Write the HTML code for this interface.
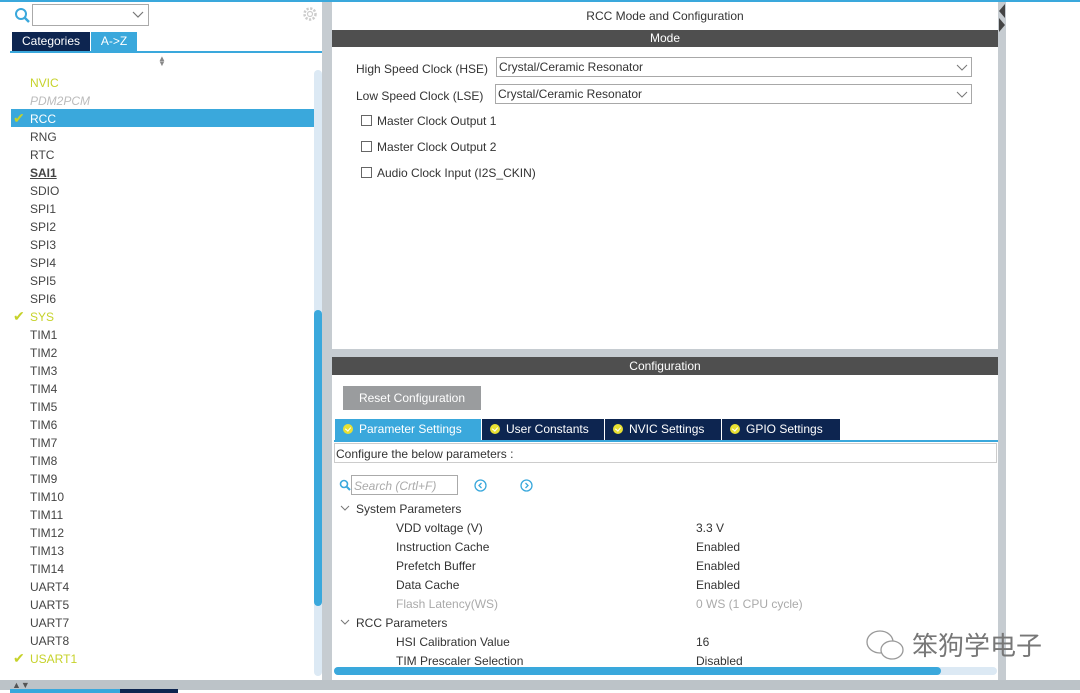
<!DOCTYPE html>
<html><head><meta charset="utf-8"><style>
*{margin:0;padding:0;box-sizing:border-box}
body{width:1080px;height:693px;overflow:hidden;background:#fff;font-family:"Liberation Sans","Noto Sans CJK SC",sans-serif;font-size:12px;color:#333;position:relative}
.a{position:absolute}
.li{position:absolute;left:30px;font-size:12px;color:#444;white-space:nowrap;margin-top:1px}
.t{position:absolute;white-space:nowrap;font-size:12px;color:#333}
.chk{position:absolute;width:11px;height:11px;border:1px solid #666;background:#fff}
.sel{position:absolute;height:20px;border:1px solid #a8a8a8;background:#fff;padding-left:2px;line-height:18px;color:#333}
.tab{position:absolute;top:419px;height:21px;color:#fff;line-height:21px;font-size:12px;padding-left:8px;white-space:nowrap}
.dot{display:inline-block;width:10px;height:10px;border-radius:50%;background:#e8e033;margin-right:6px;vertical-align:-1px;position:relative}
.dot:after{content:"";position:absolute;left:3px;top:2px;width:3px;height:4px;border:solid #fff;border-width:0 1.5px 1.5px 0;transform:rotate(40deg)}
</style></head><body>
<div class="a" style="left:0;top:0;width:1080px;height:2px;background:#3aa8dc"></div>
<div class="a" style="left:322px;top:2px;width:10px;height:678px;background:#c6ccd1"></div>
<div class="a" style="left:998px;top:2px;width:8px;height:678px;background:#c6ccd1"></div>
<div class="a" style="left:0;top:680px;width:1080px;height:10px;background:#bcc3c8"></div>
<div class="a" style="left:12px;top:680px;font-size:9px;color:#555;line-height:10px">▲▼</div>
<div class="a" style="left:10px;top:689px;width:110px;height:4px;background:#3aa8dc"></div>
<div class="a" style="left:120px;top:689px;width:58px;height:4px;background:#0d2550"></div>
<div class="a" style="left:999px;top:4px;width:0;height:0;border-top:7px solid transparent;border-bottom:7px solid transparent;border-right:6px solid #444"></div>
<div class="a" style="left:999px;top:18px;width:0;height:0;border-top:7px solid transparent;border-bottom:7px solid transparent;border-left:6px solid #444"></div>
<svg class="a" style="left:14px;top:7px" width="18" height="18" viewBox="0 0 18 18"><circle cx="7" cy="7" r="5" fill="none" stroke="#3aa8dc" stroke-width="2"/><line x1="10.5" y1="10.5" x2="15" y2="15" stroke="#3aa8dc" stroke-width="2.5"/></svg>
<div class="a" style="left:32px;top:4px;width:117px;height:22px;border:1px solid #aaa;background:#fff"></div>
<svg class="a" style="left:132px;top:11px" width="12" height="8"><polyline points="1,1 6,6 11,1" fill="none" stroke="#777" stroke-width="1.2"/></svg>
<svg class="a" style="left:302px;top:6px" width="16" height="16" viewBox="0 0 16 16"><circle cx="8" cy="8" r="5.5" fill="none" stroke="#ccc" stroke-width="2.5" stroke-dasharray="2.2 1.5"/><circle cx="8" cy="8" r="2.5" fill="none" stroke="#ccc" stroke-width="1.2"/></svg>
<div class="a" style="left:12px;top:32px;width:78px;height:19px;background:#0d2550;color:#fff;line-height:19px;text-align:center;font-size:12px">Categories</div>
<div class="a" style="left:91px;top:32px;width:46px;height:19px;background:#3aa8dc;color:#fff;line-height:19px;text-align:center;font-size:12px">A-&gt;Z</div>
<div class="a" style="left:10px;top:51px;width:312px;height:2px;background:#3aa8dc"></div>
<div class="a" style="left:158px;top:56px;font-size:8px;color:#888;line-height:5px">▲<br>▼</div>
<div class="a" style="left:314px;top:70px;width:8px;height:606px;background:#dce9f4;border-radius:4px"></div>
<div class="a" style="left:314px;top:310px;width:8px;height:296px;background:#3aa8dc;border-radius:4px"></div>
<div class="a" style="left:11px;top:109px;width:303px;height:18px;background:#3aa8dc"></div>
<div class="li" style="top:75px;color:#c6d22a">NVIC</div>
<div class="li" style="top:93px;color:#bbb;font-style:italic">PDM2PCM</div>
<div class="li" style="top:111px;color:#fff">RCC</div>
<div class="a" style="left:13px;top:110px;color:#c6d22a;font-size:14px">✔</div>
<div class="li" style="top:129px">RNG</div>
<div class="li" style="top:147px">RTC</div>
<div class="li" style="top:165px;font-weight:bold;text-decoration:underline">SAI1</div>
<div class="li" style="top:183px">SDIO</div>
<div class="li" style="top:201px">SPI1</div>
<div class="li" style="top:219px">SPI2</div>
<div class="li" style="top:237px">SPI3</div>
<div class="li" style="top:255px">SPI4</div>
<div class="li" style="top:273px">SPI5</div>
<div class="li" style="top:291px">SPI6</div>
<div class="li" style="top:309px;color:#c6d22a">SYS</div>
<div class="a" style="left:13px;top:308px;color:#c6d22a;font-size:14px">✔</div>
<div class="li" style="top:327px">TIM1</div>
<div class="li" style="top:345px">TIM2</div>
<div class="li" style="top:363px">TIM3</div>
<div class="li" style="top:381px">TIM4</div>
<div class="li" style="top:399px">TIM5</div>
<div class="li" style="top:417px">TIM6</div>
<div class="li" style="top:435px">TIM7</div>
<div class="li" style="top:453px">TIM8</div>
<div class="li" style="top:471px">TIM9</div>
<div class="li" style="top:489px">TIM10</div>
<div class="li" style="top:507px">TIM11</div>
<div class="li" style="top:525px">TIM12</div>
<div class="li" style="top:543px">TIM13</div>
<div class="li" style="top:561px">TIM14</div>
<div class="li" style="top:579px">UART4</div>
<div class="li" style="top:597px">UART5</div>
<div class="li" style="top:615px">UART7</div>
<div class="li" style="top:633px">UART8</div>
<div class="li" style="top:651px;color:#c6d22a">USART1</div>
<div class="a" style="left:13px;top:650px;color:#c6d22a;font-size:14px">✔</div>
<div class="t" style="left:332px;width:666px;top:9px;text-align:center">RCC Mode and Configuration</div>
<div class="a" style="left:332px;top:30px;width:666px;height:17px;background:#4f4f4f;color:#fff;text-align:center;line-height:17px">Mode</div>
<div class="t" style="left:356px;top:62px">High Speed Clock (HSE)</div>
<div class="sel" style="left:496px;top:57px;width:476px">Crystal/Ceramic Resonator</div>
<svg class="a" style="left:956px;top:64px" width="12" height="8"><polyline points="1,1 6,6 11,1" fill="none" stroke="#777" stroke-width="1"/></svg>
<div class="t" style="left:356px;top:89px">Low Speed Clock (LSE)</div>
<div class="sel" style="left:495px;top:84px;width:477px">Crystal/Ceramic Resonator</div>
<svg class="a" style="left:956px;top:91px" width="12" height="8"><polyline points="1,1 6,6 11,1" fill="none" stroke="#777" stroke-width="1"/></svg>
<div class="chk" style="left:361px;top:115px"></div><div class="t" style="left:377px;top:114px">Master Clock Output 1</div>
<div class="chk" style="left:361px;top:141px"></div><div class="t" style="left:377px;top:140px">Master Clock Output 2</div>
<div class="chk" style="left:361px;top:167px"></div><div class="t" style="left:377px;top:166px">Audio Clock Input (I2S_CKIN)</div>
<div class="a" style="left:332px;top:349px;width:666px;height:8px;background:#c6ccd1"></div>
<div class="a" style="left:332px;top:357px;width:666px;height:18px;background:#4f4f4f;color:#fff;text-align:center;line-height:18px">Configuration</div>
<div class="a" style="left:343px;top:386px;width:138px;height:24px;background:#9a9c9e;color:#fff;line-height:24px;text-align:center">Reset Configuration</div>
<div class="tab" style="left:335px;width:146px;background:#3aa8dc"><span class="dot"></span>Parameter Settings</div>
<div class="tab" style="left:482px;width:122px;background:#0d2550"><span class="dot"></span>User Constants</div>
<div class="tab" style="left:605px;width:116px;background:#0d2550"><span class="dot"></span>NVIC Settings</div>
<div class="tab" style="left:722px;width:118px;background:#0d2550"><span class="dot"></span>GPIO Settings</div>
<div class="a" style="left:334px;top:440px;width:664px;height:2px;background:#3aa8dc"></div>
<div class="a" style="left:334px;top:443px;width:663px;height:20px;border:1px solid #ccc"></div>
<div class="t" style="left:336px;top:447px">Configure the below parameters :</div>
<svg class="a" style="left:339px;top:479px" width="12" height="12"><circle cx="5" cy="5" r="3.5" fill="none" stroke="#3aa8dc" stroke-width="1.6"/><line x1="7.5" y1="7.5" x2="11" y2="11" stroke="#3aa8dc" stroke-width="2"/></svg>
<div class="a" style="left:351px;top:475px;width:107px;height:20px;border:1px solid #aaa"></div>
<div class="t" style="left:354px;top:479px;color:#aaa;font-style:italic">Search (Crtl+F)</div>
<svg class="a" style="left:474px;top:479px" width="13" height="13"><circle cx="6.5" cy="6.5" r="5.5" fill="none" stroke="#3aa8dc" stroke-width="1.3"/><polyline points="7.5,4 5,6.5 7.5,9" fill="none" stroke="#3aa8dc" stroke-width="1.3"/></svg>
<svg class="a" style="left:520px;top:479px" width="13" height="13"><circle cx="6.5" cy="6.5" r="5.5" fill="none" stroke="#3aa8dc" stroke-width="1.3"/><polyline points="5.5,4 8,6.5 5.5,9" fill="none" stroke="#3aa8dc" stroke-width="1.3"/></svg>
<svg class="a" style="left:340px;top:505px" width="10" height="7"><polyline points="1,1 5,5 9,1" fill="none" stroke="#777" stroke-width="1"/></svg>
<div class="t" style="left:356px;top:502px">System Parameters</div>
<div class="t" style="left:396px;top:521px">VDD voltage (V)</div><div class="t" style="left:696px;top:521px">3.3 V</div>
<div class="t" style="left:396px;top:540px">Instruction Cache</div><div class="t" style="left:696px;top:540px">Enabled</div>
<div class="t" style="left:396px;top:559px">Prefetch Buffer</div><div class="t" style="left:696px;top:559px">Enabled</div>
<div class="t" style="left:396px;top:578px">Data Cache</div><div class="t" style="left:696px;top:578px">Enabled</div>
<div class="t" style="left:396px;top:597px;color:#aaa">Flash Latency(WS)</div><div class="t" style="left:696px;top:597px;color:#aaa">0 WS (1 CPU cycle)</div>
<svg class="a" style="left:340px;top:619px" width="10" height="7"><polyline points="1,1 5,5 9,1" fill="none" stroke="#777" stroke-width="1"/></svg>
<div class="t" style="left:356px;top:616px">RCC Parameters</div>
<div class="t" style="left:396px;top:635px">HSI Calibration Value</div><div class="t" style="left:696px;top:635px">16</div>
<div class="t" style="left:396px;top:654px">TIM Prescaler Selection</div><div class="t" style="left:696px;top:654px">Disabled</div>
<div class="a" style="left:334px;top:667px;width:663px;height:8px;background:#dce9f4;border-radius:4px"></div>
<div class="a" style="left:334px;top:667px;width:607px;height:8px;background:#3aa8dc;border-radius:4px"></div>
<svg class="a" style="left:864px;top:628px" width="44" height="36" viewBox="0 0 44 36"><ellipse cx="16" cy="14" rx="13" ry="11" fill="none" stroke="#999" stroke-width="1.3"/><ellipse cx="28" cy="22" rx="11" ry="9" fill="#fff" stroke="#999" stroke-width="1.3"/></svg>
<div class="a" style="left:912px;top:628px;font-size:26px;color:#777;font-family:'Noto Sans CJK SC',sans-serif;line-height:34px">笨狗学电子</div>
</body></html>
